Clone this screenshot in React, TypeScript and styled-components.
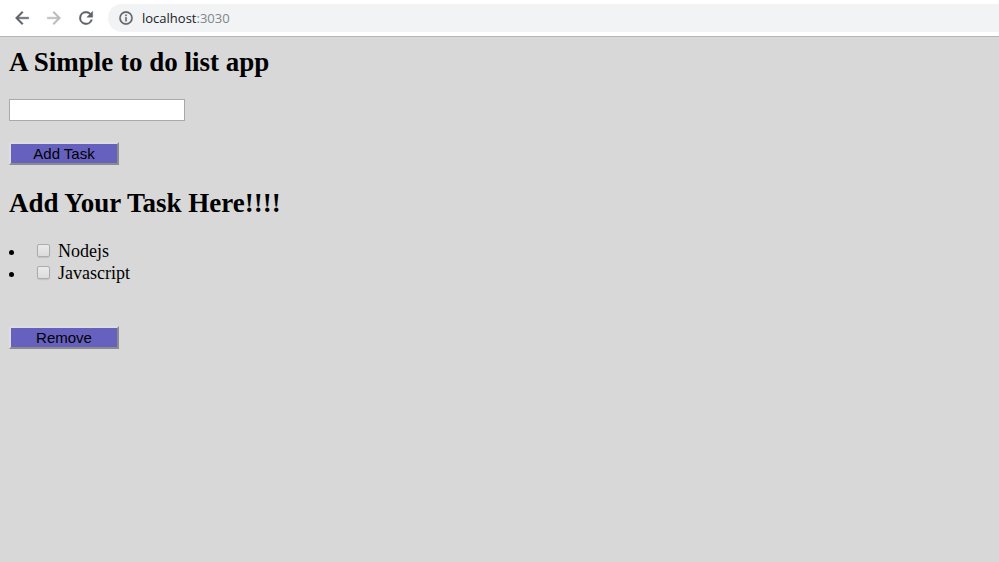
import React, { useState } from "react";
import styled, { createGlobalStyle } from "styled-components";

const GlobalStyle = createGlobalStyle`
  * { box-sizing: border-box; }
  body { margin: 0; background: #d8d8d8; color: #000; font-family: "Liberation Serif", "Times New Roman", serif; }
`;
const Toolbar = styled.header`
  display: flex;
  align-items: center;
  height: 37px;
  padding: 0 0 1px 12px;
  background: #fff;
  border-bottom: 1px solid #b6b4b6;
`;
const NavButton = styled.button`
  display: flex;
  width: 20px;
  height: 20px;
  margin-right: 12px;
  padding: 0;
  border: 0;
  background: none;
  color: #5f6368;
  &:disabled { color: #bababa; }
`;
const AddressBar = styled.div`
  display: flex;
  flex: 1;
  align-items: center;
  gap: 8px;
  height: 28px;
  padding-left: 10px;
  border-radius: 14px 0 0 14px;
  background: #f1f3f4;
  color: #5f6368;
  font: 13px/20px "Open Sans", "Noto Sans", sans-serif;
`;
const Host = styled.span`
  color: #202124;
`;
const Port = styled.span`
  color: #80868b;
`;
const Page = styled.main`
  padding: 9px;
`;
const Title = styled.h2`
  margin: 0 0 21px;
  font-size: 27px;
  line-height: 32px;
`;
const TaskInput = styled.input`
  display: block;
  width: 176px;
  height: 22px;
  margin-bottom: 21px;
  padding: 1px 2px;
  border: 1px solid #a9a9a9;
  background: #fff;
`;
const ActionButton = styled.button`
  display: block;
  width: 110px;
  height: 23px;
  margin-bottom: 22px;
  padding: 0;
  border: 2px solid;
  border-color: #dddddd #8b8b8b #8b8b8b #dddddd;
  background: #6660bf;
  color: #000;
  font: 15px/17px "Liberation Sans", Arial, sans-serif;
`;
const TaskList = styled.ul`
  margin: 0 0 42px;
  padding: 0;
  list-style: disc inside;
  font-size: 18px;
  line-height: 22px;
`;
const TaskCheck = styled.input`
  width: 13px;
  height: 13px;
  margin: 0 8px 0 4px;
  appearance: none;
  border: 1px solid #acacac;
  border-radius: 2px;
  background: linear-gradient(#eaeaea, #dcdcdc);
  box-shadow: 0 1px 1px #c4c4c4;
  &:checked { background: #6660bf; }
`;

const icons = {
  back: "M20 11H7.83l5.59-5.59L12 4l-8 8 8 8 1.41-1.41L7.83 13H20v-2z",
  forward: "M12 4l-1.41 1.41L16.17 11H4v2h12.17l-5.58 5.59L12 20l8-8z",
  reload: "M17.65 6.35A7.96 7.96 0 0 0 12 4a8 8 0 1 0 7.73 10h-2.08A6 6 0 1 1 12 6c1.66 0 3.14.69 4.22 1.78L13 11h7V4l-2.35 2.35z",
  info: "M11 7h2v2h-2zm0 4h2v6h-2zm1-9a10 10 0 1 0 0 20 10 10 0 0 0 0-20zm0 18a8 8 0 1 1 0-16 8 8 0 0 1 0 16z",
};
const Icon = ({ name, size = 20 }: { name: keyof typeof icons; size?: number }) => (
  <svg width={size} height={size} viewBox="0 0 24 24" fill="currentColor" stroke="currentColor" strokeWidth="0.5" aria-hidden="true">
    <path d={icons[name]} />
  </svg>
);

export default function App() {
  const [tasks, setTasks] = useState(["Nodejs", "Javascript"]);
  const [done, setDone] = useState<string[]>([]);
  const [draft, setDraft] = useState("");
  const add = () => {
    if (draft.trim()) setTasks([...tasks, draft.trim()]);
    setDraft("");
  };
  return (
    <>
      <GlobalStyle />
      <Toolbar>
        <NavButton aria-label="Back"><Icon name="back" /></NavButton>
        <NavButton aria-label="Forward" disabled><Icon name="forward" /></NavButton>
        <NavButton aria-label="Reload"><Icon name="reload" /></NavButton>
        <AddressBar>
          <Icon name="info" size={16} />
          <Host>localhost<Port>:3030</Port></Host>
        </AddressBar>
      </Toolbar>
      <Page>
        <Title>A Simple to do list app</Title>
        <TaskInput aria-label="New task" value={draft} onChange={(e) => setDraft(e.target.value)} />
        <ActionButton onClick={add}>Add Task</ActionButton>
        <Title>Add Your Task Here!!!!</Title>
        <TaskList>
          {tasks.map((task) => (
            <li key={task}>
              <label>
                <TaskCheck
                  type="checkbox"
                  checked={done.includes(task)}
                  onChange={() => setDone(done.includes(task) ? done.filter((t) => t !== task) : [...done, task])}
                />
                {task}
              </label>
            </li>
          ))}
        </TaskList>
        <ActionButton onClick={() => setTasks(tasks.filter((t) => !done.includes(t)))}>Remove</ActionButton>
      </Page>
    </>
  );
}
